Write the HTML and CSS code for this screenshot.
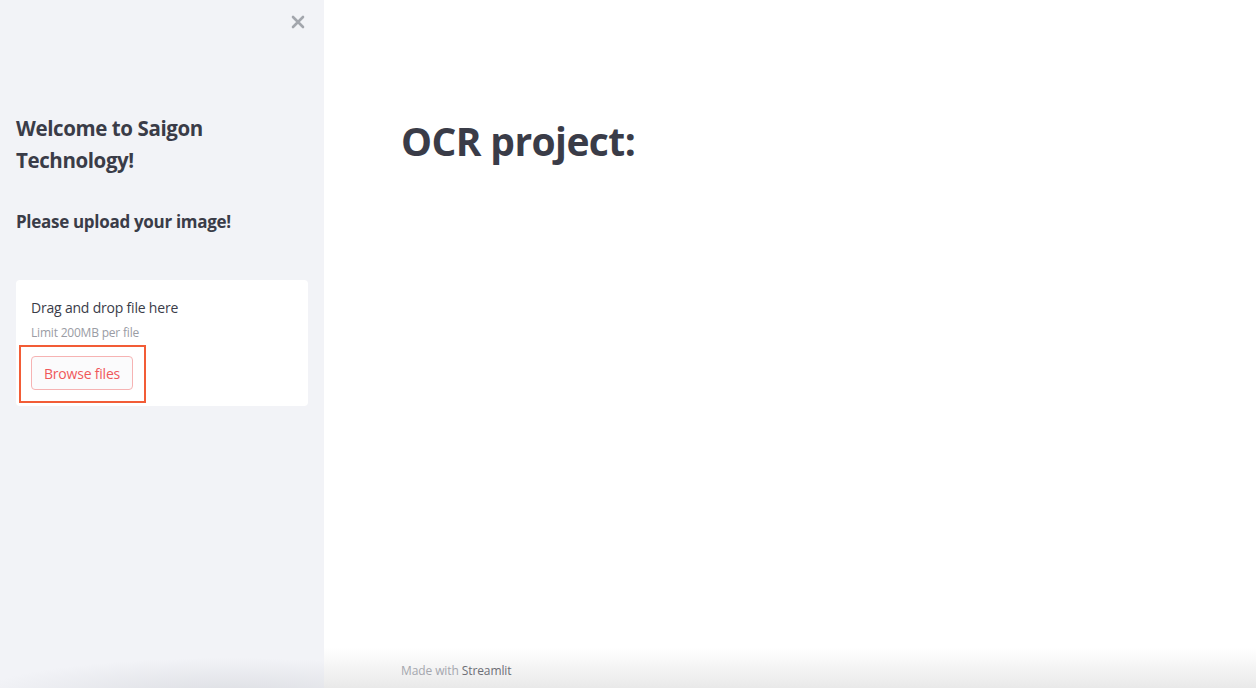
FILE: index.html
```html
<!DOCTYPE html>
<html>
<head>
<meta charset="utf-8">
<link rel="stylesheet" href="styles.css">
</head>
<body>
<div class="app">
  <aside class="sidebar">
    <div class="side-top">
      <button class="close" aria-label="Close">
        <svg width="14" height="14" viewBox="0 0 14 14"><path d="M2 2 L12 12 M12 2 L2 12" stroke="#a3a6ad" stroke-width="2.6" stroke-linecap="round"/></svg>
      </button>
    </div>
    <h2 class="welcome">Welcome to Saigon Technology!</h2>
    <h3 class="please">Please upload your image!</h3>
    <div class="uploader">
      <div class="drag">Drag and drop file here</div>
      <div class="limit">Limit 200MB per file</div>
      <div class="btn-wrap">
        <button class="browse">Browse files</button>
        <span class="highlight"></span>
      </div>
    </div>
    <div class="side-fade"></div>
  </aside>
  <main class="main">
    <h1 class="title">OCR project:</h1>
    <footer class="footer">Made with <span class="brand">Streamlit</span></footer>
  </main>
</div>
</body>
</html>
```
FILE: styles.css
```css
* { box-sizing: border-box; }
html, body { margin: 0; padding: 0; height: 100%; }
body {
  font-family: "Open Sans", "Noto Sans", sans-serif;
  color: #31333f;
  background: #fff;
  overflow: hidden;
}
.app { display: flex; height: 688px; width: 1256px; }
.sidebar {
  width: 324px;
  flex: none;
  background: #f2f3f7;
  padding: 0 16px;
  display: flex;
  flex-direction: column;
  position: relative;
}
.side-top { display: flex; justify-content: flex-end; padding-top: 15px; height: 112px; }
.close {
  background: none; border: 0; padding: 0; width: 14px; height: 14px;
  margin-right: 3px; cursor: pointer; display: block;
}
.welcome {
  margin: 0;
  font-size: 20.5px;
  line-height: 32px;
  font-weight: 700;
  color: #3a3c48;
  width: 230px;
  letter-spacing: -0.4px;
}
.please {
  margin: 33px 0 0;
  font-size: 17px;
  line-height: 26px;
  font-weight: 700;
  color: #3a3c48;
  letter-spacing: -0.3px;
}
.uploader {
  margin-top: 45px;
  background: #fff;
  border-radius: 4px;
  padding: 18px 15px 16px;
  width: 292px;
}
.drag { font-size: 14px; line-height: 20px; color: #3a3c48; letter-spacing: -0.2px; }
.limit { font-size: 12px; line-height: 16px; color: #9a9ca4; margin-top: 7px; letter-spacing: -0.2px; }
.btn-wrap { position: relative; margin-top: 15px; display: inline-block; }
.browse {
  display: block;
  font-family: inherit;
  font-size: 14px;
  color: #f0585a;
  background: #fbfbfc;
  border: 1px solid #f6b3b3;
  border-radius: 4px;
  height: 34px;
  width: 102px;
  padding: 0;
  letter-spacing: -0.2px;
}
.highlight {
  position: absolute;
  left: -12px; top: -11px;
  width: 127px; height: 58px;
  border: 2px solid #f25c36;
}
.side-fade {
  position: absolute;
  left: 0; right: 0; bottom: 0; height: 40px;
  background: radial-gradient(ellipse 260px 40px at 230px 50px, rgba(200,202,208,0.55), rgba(242,243,247,0));
}
.main {
  flex: 1;
  position: relative;
  padding: 114px 0 0 77px;
  background: #fff;
}
.title {
  margin: 0;
  font-size: 39px;
  line-height: 54px;
  font-weight: 700;
  color: #3a3c48;
  letter-spacing: -0.6px;
}
.footer {
  position: absolute;
  left: 0; right: 0; bottom: 0;
  height: 40px;
  padding: 14px 0 0 77px;
  font-size: 12px;
  color: #a5a7ae;
  background: linear-gradient(to bottom, rgba(255,255,255,0), #e9e9e9);
  letter-spacing: -0.1px;
}
.brand { color: #6c6e76; }
```
